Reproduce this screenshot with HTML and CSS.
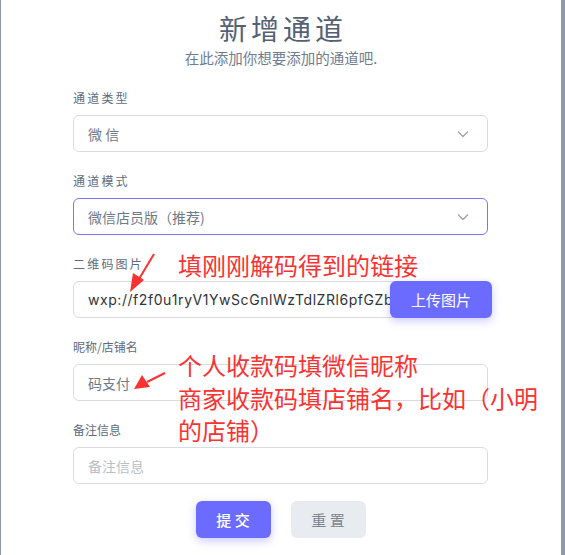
FILE: index.html
```html
<!DOCTYPE html>
<html lang="zh-CN">
<head>
    <meta charset="UTF-8">
    <title>新增通道</title>
    <link rel="stylesheet" href="styles.css">
</head>
<body>

<div class="modal">
    <h2 class="title">新增通道</h2>
    <p class="subtitle">在此添加你想要添加的通道吧.</p>

    <form class="form">
        <div class="field">
            <label class="label spaced">通道类型</label>
            <div class="select">
                <span>微 信</span>
                <svg class="chev" width="12" height="8" viewBox="0 0 12 8"><path d="M1 1.5 6 6.5 11 1.5" fill="none" stroke="#9aa3b0" stroke-width="1.3"/></svg>
            </div>
        </div>

        <div class="field">
            <label class="label spaced">通道模式</label>
            <div class="select active">
                <span>微信店员版（推荐)</span>
                <svg class="chev" width="12" height="8" viewBox="0 0 12 8"><path d="M1 1.5 6 6.5 11 1.5" fill="none" stroke="#9aa3b0" stroke-width="1.3"/></svg>
            </div>
        </div>

        <div class="field">
            <label class="label spaced">二维码图片</label>
            <div class="upload-row">
                <div class="input value"><span class="clip">wxp://f2f0u1ryV1YwScGnlWzTdlZRl6pfGZbl</span></div>
                <button type="button" class="btn btn-upload">上传图片</button>
            </div>
        </div>

        <div class="field">
            <label class="label">昵称/店铺名</label>
            <div class="input muted">码支付</div>
        </div>

        <div class="field">
            <label class="label">备注信息</label>
            <div class="input placeholder">备注信息</div>
        </div>

        <div class="actions">
            <button type="button" class="btn btn-submit">提 交</button>
            <button type="button" class="btn btn-reset">重 置</button>
        </div>
    </form>

    <!-- red annotations over the screenshot -->
    <div class="note note-1">填刚刚解码得到的链接</div>
    <div class="note note-2">个人收款码填微信昵称<br>商家收款码填店铺名，比如（小明<br>的店铺）</div>
    <svg class="arrows" width="565" height="555" viewBox="0 0 565 555">
        <line x1="154" y1="254" x2="139" y2="279" stroke="#fa3232" stroke-width="2"/>
        <polygon points="130,292 133,273 144,280" fill="#fa3232"/>
        <line x1="165" y1="373" x2="147" y2="382" stroke="#fa3232" stroke-width="2"/>
        <polygon points="134,389 142,375 150,387" fill="#fa3232"/>
    </svg>
</div>

</body>
</html>
```

FILE: styles.css
```css
html, body { margin: 0; padding: 0; }
body { background: #8e9aab; font-family: "Inter", "Noto Sans CJK SC", sans-serif; color: #6e7a8a; }
.modal { position: relative; margin: 0 4px 0 1px; height: 555px; background: #fff; padding-top: 11px; box-sizing: border-box; }
.title { margin: 0; padding-left: 4px; text-align: center; font-size: 28px; line-height: 34px; font-weight: 400; letter-spacing: 4px; color: #536174; font-family: "Noto Sans CJK SC", sans-serif; }
.subtitle { margin: 3px 0 0; text-align: center; font-size: 14.5px; line-height: 20px; color: #6e7d90; font-family: "Noto Sans CJK SC", sans-serif; }
.form { margin: 21px 0 0 72px; width: 415px; display: flex; flex-direction: column; gap: 20px; }
.field { display: flex; flex-direction: column; gap: 8px; }
.label { font-size: 12px; line-height: 18px; color: #5e6b7c; font-family: "Noto Sans CJK SC", sans-serif; }
.label.spaced { letter-spacing: 2.2px; }
.select, .input { height: 37px; box-sizing: border-box; border: 1px solid #d8dce2; border-radius: 6px; padding: 0 14px; display: flex; align-items: center; font-size: 14px; font-family: "Noto Sans CJK SC", sans-serif; color: #6e7a8a; white-space: nowrap; overflow: hidden; }
.select { justify-content: space-between; padding-right: 18px; }
.select.active { border-color: #7b74f3; }
.upload-row { position: relative; }
.input.value { padding-right: 97px; color: #2f333a; font-family: "Inter", "Noto Sans CJK SC", sans-serif; letter-spacing: 0.55px; }
.clip { flex: 1; overflow: hidden; white-space: nowrap; }
.input.placeholder { color: #b9c0ca; }
.btn { border: none; border-radius: 6px; height: 37px; font-family: "Noto Sans CJK SC", sans-serif; cursor: pointer; }
.btn-upload { position: absolute; top: 0; right: -4px; width: 102px; background: #6b6bff; color: #fff; font-size: 15px; box-shadow: 0 3px 8px rgba(107, 107, 255, 0.35); }
.actions { display: flex; justify-content: center; gap: 20px; margin-top: -3px; }
.btn-submit { width: 75px; background: #6b6bff; color: #fff; font-size: 15px; font-weight: 500; box-shadow: 0 3px 8px rgba(107, 107, 255, 0.35); }
.btn-reset { width: 75px; background: #e8ebef; color: #7c8594; font-size: 15px; }
.note { position: absolute; left: 177px; color: #fa3232; font-size: 24px; line-height: 32.5px; font-family: "Noto Sans CJK SC", sans-serif; white-space: nowrap; }
.note-1 { top: 249px; }
.note-2 { top: 349px; }
.arrows { position: absolute; left: -1px; top: 0; pointer-events: none; }
```
